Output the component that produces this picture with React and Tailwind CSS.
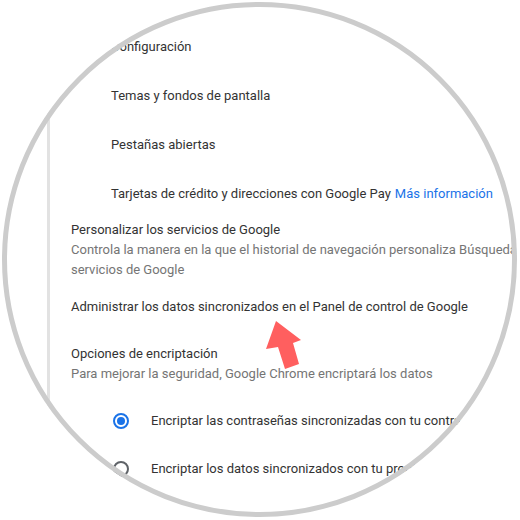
import React from "react";

const items = [
  "Configuración",
  "Temas y fondos de pantalla",
  "Pestañas abiertas",
];

function Radio({ checked }) {
  return (
    <span
      className={`flex h-4 w-4 shrink-0 items-center justify-center rounded-full border-2 ${
        checked ? "border-[#1a73e8]" : "border-[#5f6368]"
      }`}
    >
      {checked && <span className="h-2 w-2 rounded-full bg-[#1a73e8]" />}
    </span>
  );
}

export default function App() {
  return (
    <div
      className="relative h-[520px] w-[520px] overflow-hidden bg-white text-[13px] text-[#333333]"
      style={{ fontFamily: "Roboto, 'Liberation Sans', sans-serif" }}
    >
      <div className="ml-[47px] h-full border-l-[3px] border-[#e2e2e2] pl-[21px] pt-[22px]">
        {items.map((t) => (
          <div key={t} className="flex h-[49px] items-center pl-[40px]">
            {t}
          </div>
        ))}
        <div className="flex h-[49px] items-center whitespace-nowrap pl-[40px]">
          Tarjetas de crédito y direcciones con Google Pay
          <span className="ml-1 text-[#1a73e8]">Más información</span>
        </div>

        <div className="mt-[2px] leading-5">
          <div>Personalizar los servicios de Google</div>
          <div className="whitespace-nowrap text-[#757575]">
            Controla la manera en la que el historial de navegación personaliza Búsqueda, anuncios y otros
          </div>
          <div className="text-[#757575]">servicios de Google</div>
        </div>

        <div className="flex h-[54px] items-center whitespace-nowrap">
          Administrar los datos sincronizados en el Panel de control de Google
        </div>

        <div className="mt-[10px] leading-5">
          <div>Opciones de encriptación</div>
          <div className="whitespace-nowrap text-[#757575]">
            Para mejorar la seguridad, Google Chrome encriptará los datos
          </div>
        </div>

        <div className="mt-[13px]">
          <div className="flex h-[48px] items-center gap-[22px] whitespace-nowrap pl-[42px]">
            <Radio checked />
            Encriptar las contraseñas sincronizadas con tu contraseña de Google
          </div>
          <div className="flex h-[48px] items-center gap-[22px] whitespace-nowrap pl-[42px]">
            <Radio />
            Encriptar los datos sincronizados con tu propia frase de contraseña
          </div>
        </div>
      </div>

      <svg className="absolute left-0 top-0" width="520" height="520" viewBox="0 0 520 520">
        <polygon
          points="276,321 301,340 293,343 299,364 285,369 278,347 266,349"
          fill="#ff5f5f"
        />
      </svg>

      <div className="pointer-events-none absolute left-[2px] top-[2px] h-[515px] w-[515px] rounded-full border-[5px] border-[#cccccc] shadow-[0_0_0_400px_#ffffff]" />
    </div>
  );
}
